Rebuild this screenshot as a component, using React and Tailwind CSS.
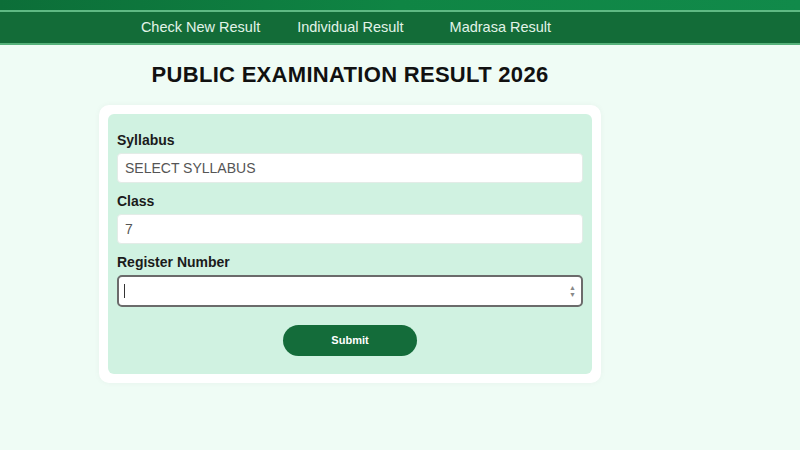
import React from 'react';

function App() {
  return (
    <div className="min-h-[450px] bg-[#effcf5] font-['Liberation_Sans',Arial,sans-serif]">
      <div className="h-[10px] bg-gradient-to-r from-[#0c6e38] via-[#0f8544] to-[#118a4a]" />
      <div className="h-[2px] bg-[#5fb983]" />
      <nav className="h-[31px] bg-[#136c38] flex items-center">
        <div className="w-[692px] flex justify-center text-[14.5px] text-[#e2f4e8]">
          <span>Check New Result</span>
          <span className="ml-[37px]">Individual Result</span>
          <span className="ml-[46px]">Madrasa Result</span>
        </div>
      </nav>
      <div className="h-[2px] bg-[#57b27b]" />

      <div className="w-[700px] flex flex-col items-center">
        <h1 className="mt-[16px] text-[22px] leading-[28px] font-bold text-[#111] tracking-[0.3px]">
          PUBLIC EXAMINATION RESULT 2026
        </h1>

        <div className="mt-[16px] w-[502px] bg-white rounded-[10px] p-[9px] shadow-[0_0_6px_rgba(0,0,0,0.04)]">
          <div className="bg-[#d0f2e1] rounded-[6px] px-[9px] pt-[18px] pb-[18px]">
            <label className="block text-[14px] font-bold text-[#1b1b1b] leading-[16px]">Syllabus</label>
            <div className="mt-[5px] h-[30px] bg-white rounded-[4px] border border-[#e3ece7] flex items-center px-[7px] text-[14px] text-[#555]">
              SELECT SYLLABUS
            </div>

            <label className="block mt-[10px] text-[14px] font-bold text-[#1b1b1b] leading-[16px]">Class</label>
            <div className="mt-[5px] h-[30px] bg-white rounded-[4px] border border-[#e3ece7] flex items-center px-[7px] text-[14px] text-[#555]">
              7
            </div>

            <label className="block mt-[10px] text-[14px] font-bold text-[#1b1b1b] leading-[16px]">Register Number</label>
            <div className="mt-[5px] h-[32px] bg-white rounded-[5px] border-2 border-[#6b6b6b] flex items-center justify-between px-[5px]">
              <span className="w-px h-[14px] bg-[#333]" />
              <span className="flex flex-col items-center text-[#888] text-[7px] leading-[7px]">
                <span>▲</span>
                <span>▼</span>
              </span>
            </div>

            <div className="flex justify-center mt-[18px]">
              <button className="w-[134px] h-[31px] rounded-full bg-[#146c3a] text-white text-[11px] font-bold">
                Submit
              </button>
            </div>
          </div>
        </div>
      </div>
    </div>
  );
}

export default App;
